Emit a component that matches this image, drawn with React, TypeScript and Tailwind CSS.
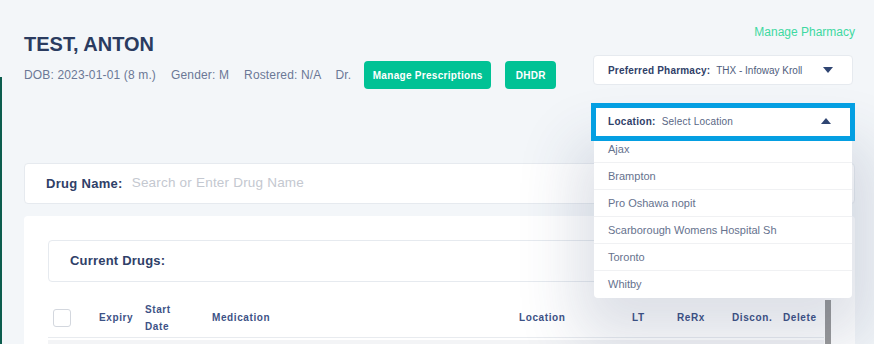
import React from 'react';

const locations = ['Ajax', 'Brampton', 'Pro Oshawa nopit', 'Scarborough Womens Hospital Sh', 'Toronto', 'Whitby'];

const Caret = ({ up }: { up?: boolean }) => (
  <svg width="10" height="6" viewBox="0 0 10 6" className="shrink-0">
    <path d={up ? 'M0 6 L5 0 L10 6 Z' : 'M0 0 L10 0 L5 6 Z'} fill="#2f4572" />
  </svg>
);

const App: React.FC = () => {
  return (
    <div className="w-[874px] h-[344px] overflow-hidden bg-[#f3f6f9] flex font-['Liberation_Sans',Arial,sans-serif]">
      {/* sidebar edge */}
      <div className="w-[2px] mt-[77px] bg-[#0c5d4e] shrink-0" />

      <div className="flex-1 pl-[22px] pr-[19px] flex flex-col">
        {/* Header */}
        <div className="shrink-0 flex justify-between pt-[25px]">
          <div className="mt-[7px]">
            <h1 className="text-[20px] leading-[24px] font-bold text-[#2a3b60]">TEST, ANTON</h1>
            <div className="mt-[5px] h-[28px] flex items-center text-[12px] tracking-[0.15px] text-[#6b7896]">
              <span>DOB: 2023-01-01 (8 m.)</span>
              <span className="ml-[15px]">Gender: M</span>
              <span className="ml-[15px]">Rostered: N/A</span>
              <span className="ml-[14px]">Dr.</span>
              <button className="ml-[13px] h-[28px] w-[127px] rounded-[4px] bg-[#00c295] text-white text-[10px] font-bold tracking-[0.3px]">
                Manage Prescriptions
              </button>
              <button className="ml-[14px] h-[28px] w-[51px] rounded-[4px] bg-[#00c295] text-white text-[10px] font-bold tracking-[0.3px]">
                DHDR
              </button>
            </div>
          </div>

          <div className="w-[260px] mr-[2px] flex flex-col">
            <a className="self-end -mr-[2px] text-[12px] leading-[14px] text-[#3ed9a1]">Manage Pharmacy</a>
            <div className="mt-[16px] h-[30px] bg-white border border-[#e6eaef] rounded-[4px] flex items-center justify-between pl-[14px] pr-[19px] text-[10px]">
              <span>
                <span className="font-bold text-[#2f4068] tracking-[0.2px]">Preferred Pharmacy:</span>
                <span className="ml-[6px] text-[#4f5d7d]">THX - Infoway Kroll</span>
              </span>
              <Caret />
            </div>
            <div className="relative mt-[18px] -mx-[2px]">
              <div className="relative z-20 h-[38px] bg-white border-[5px] border-[#049fe2] flex items-center justify-between pl-[12px] pr-[19px] pb-[2px] text-[10px]">
                <span>
                  <span className="font-bold text-[#2f4068] tracking-[0.3px]">Location:</span>
                  <span className="ml-[6px] text-[#5a6784] tracking-[0.2px]">Select Location</span>
                </span>
                <Caret up />
              </div>
              <ul className="absolute z-10 left-[3px] right-[3px] top-[33px] bg-white rounded-b-[4px] shadow-[0_25px_60px_18px_rgba(45,65,105,0.16)]">
                {locations.map((loc, i) => (
                  <li
                    key={loc}
                    className={`h-[27px] flex items-center pl-[14px] text-[11px] text-[#66728e] ${
                      i < locations.length - 1 ? 'border-b border-[#f0f1f3]' : ''
                    }`}
                  >
                    {loc}
                  </li>
                ))}
              </ul>
            </div>
          </div>
        </div>

        {/* Drug search */}
        <div className="shrink-0 mt-[22px] h-[41px] bg-white border border-[#e6eaef] rounded-[4px] flex items-center pl-[21px]">
          <span className="text-[13px] font-bold tracking-[0.3px] text-[#2f4068]">Drug Name:</span>
          <span className="ml-[9px] text-[13.5px] tracking-[0.2px] text-[#c4c8d0]">Search or Enter Drug Name</span>
        </div>

        {/* Current drugs panel */}
        <div className="shrink-0 mt-[12px] h-[200px] bg-white rounded-[4px] px-[24px] pt-[24px]">
          <div className="h-[42px] border border-[#e6eaef] rounded-[4px] flex items-center pl-[21px] text-[13px] font-bold tracking-[0.2px] text-[#2f4068]">
            Current Drugs:
          </div>
          <div className="mt-[16px] flex">
            <div className="flex-1">
              <div className="h-[40px] pl-[5px] grid grid-cols-[46px_46px_67px_307px_113px_45px_55px_51px_1fr] items-center border-b border-[#e8ebef] text-[10px] font-bold tracking-[0.6px] text-[#3d5286]">
                <div className="w-[18px] h-[18px] border border-[#d3d7de] rounded-[3px] bg-white" />
                <span>Expiry</span>
                <span className="leading-[17px]">
                  Start
                  <br />
                  Date
                </span>
                <span>Medication</span>
                <span>Location</span>
                <span>LT</span>
                <span>ReRx</span>
                <span>Discon.</span>
                <span>Delete</span>
              </div>
              <div className="mt-[2px] h-[20px] bg-[#f3f4f6]" />
            </div>
            <div className="w-[6px] mt-[2px] ml-[1px] bg-[#9a9a9a]" />
          </div>
        </div>
      </div>
    </div>
  );
};

export default App;
